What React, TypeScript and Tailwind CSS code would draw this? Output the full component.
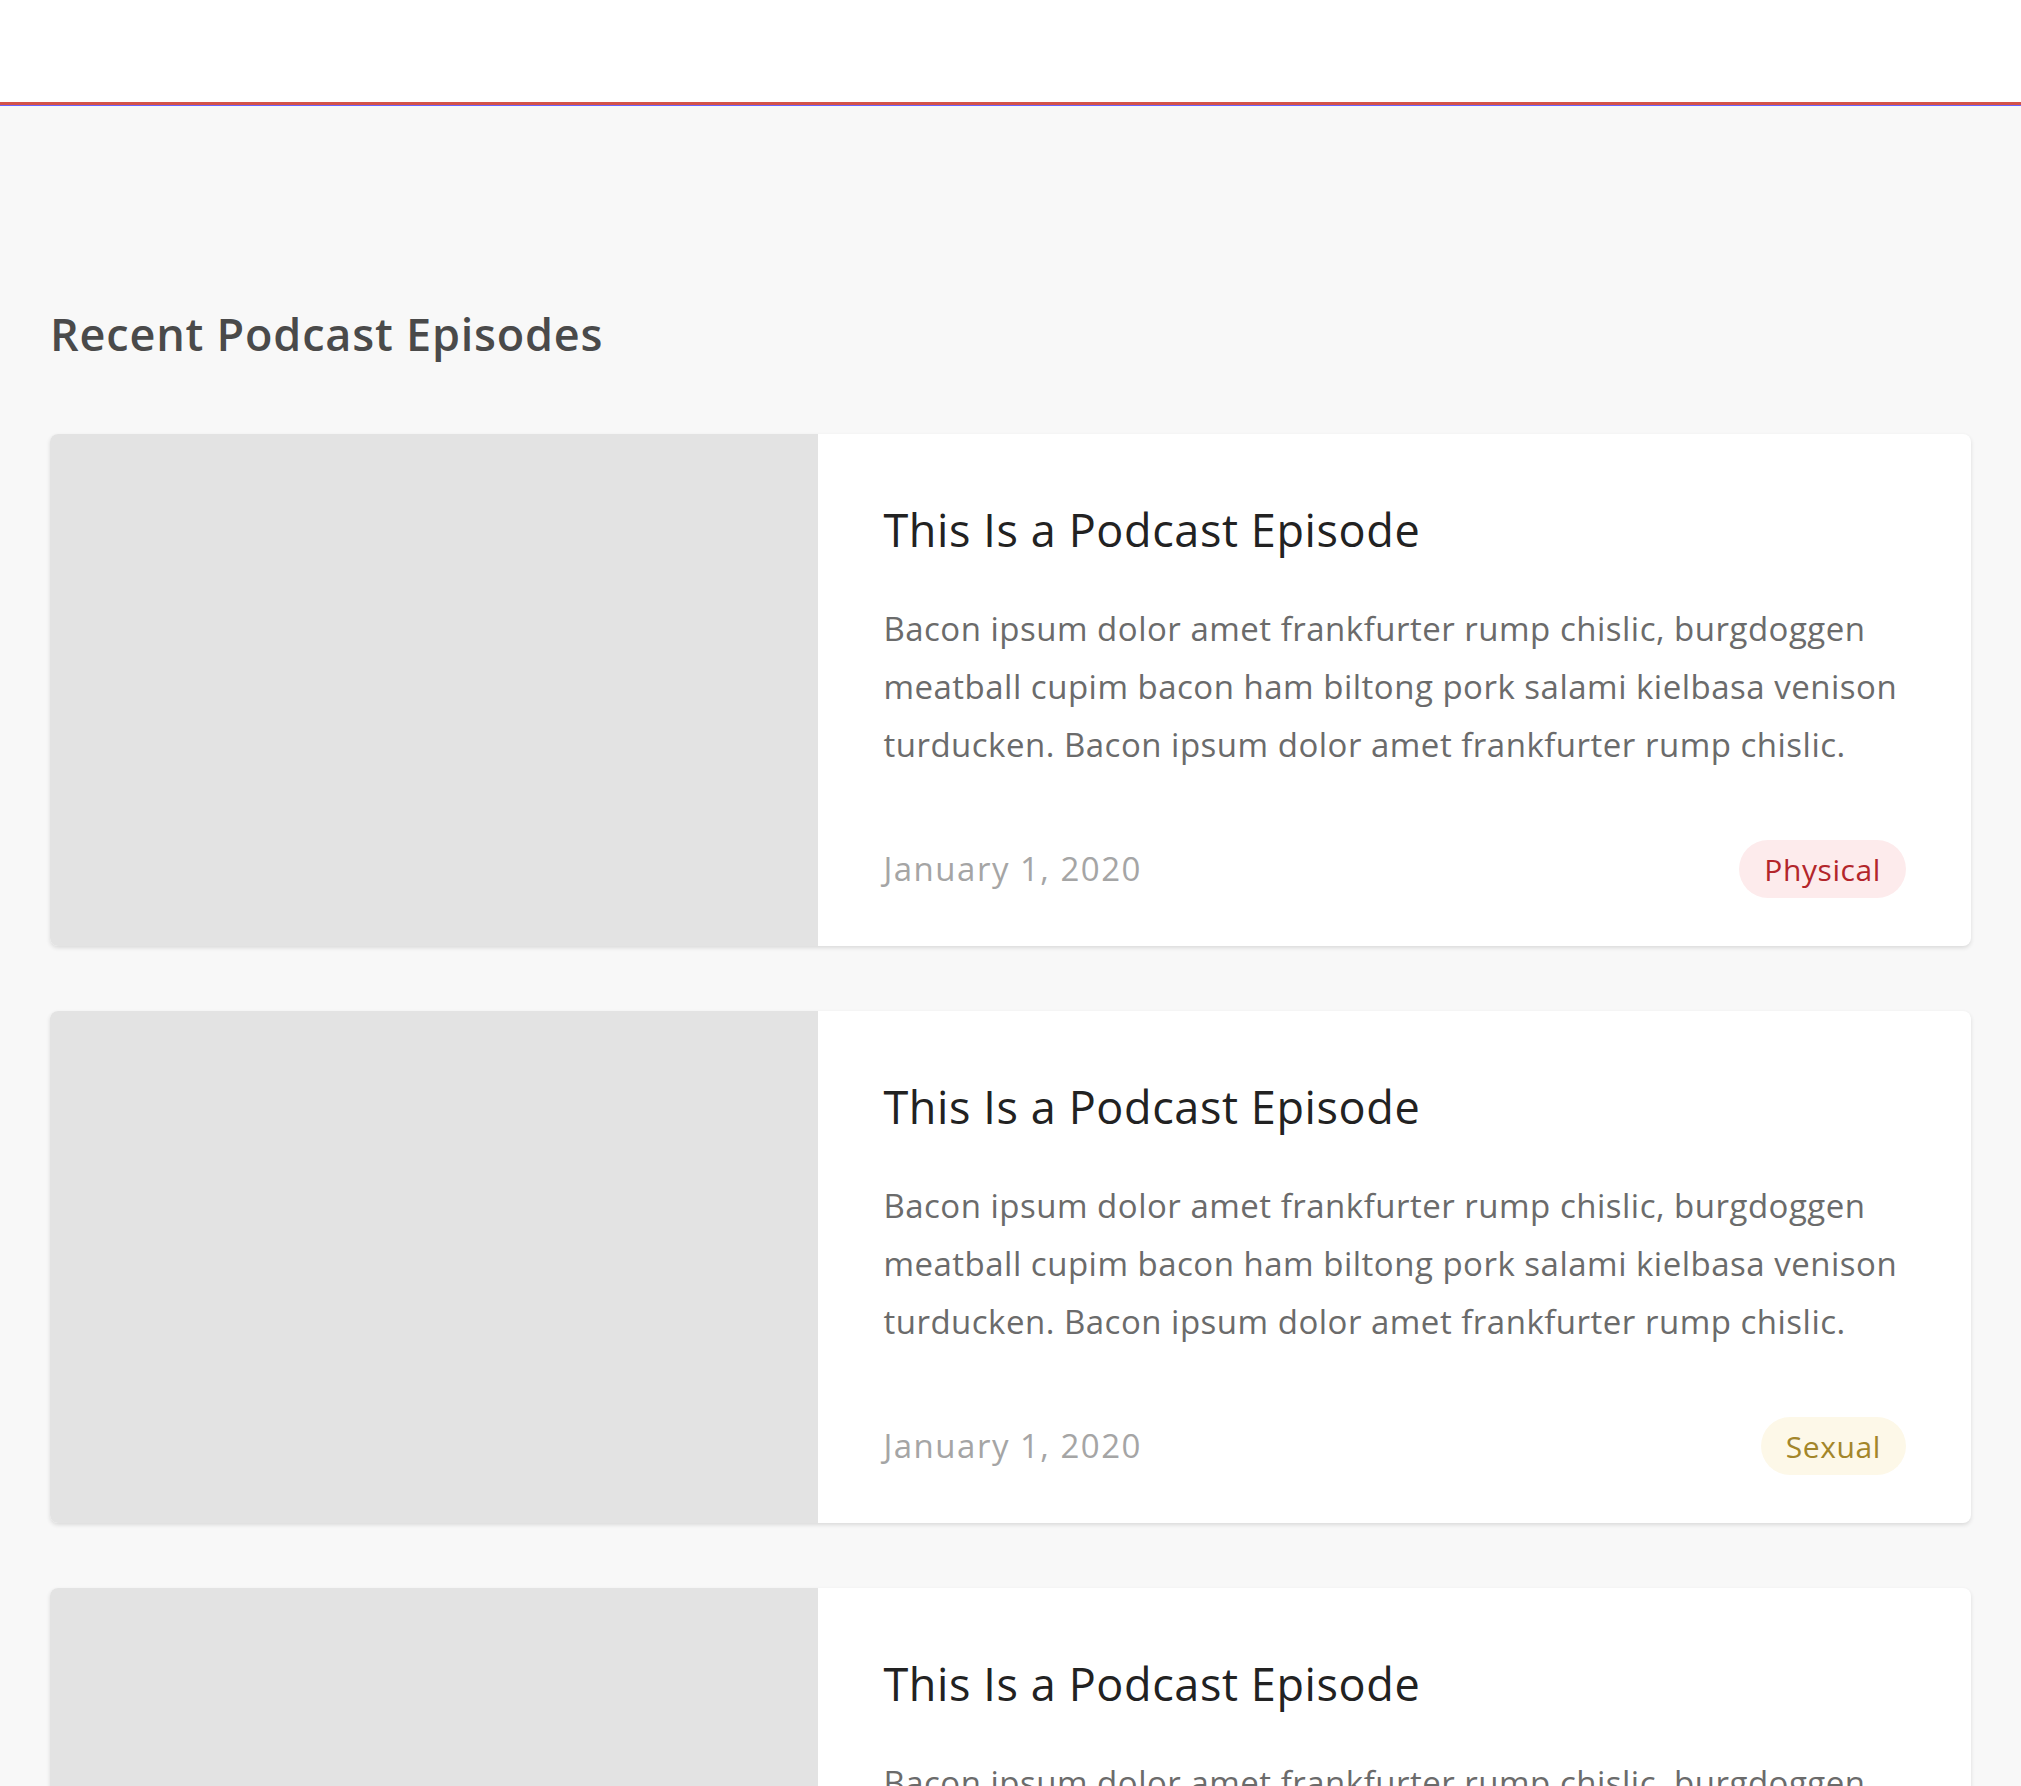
import React from 'react';

type Episode = {
  title: string;
  excerpt: string;
  date: string;
  tag: string;
  tagClass: string;
};

const excerpt =
  'Bacon ipsum dolor amet frankfurter rump chislic, burgdoggen meatball cupim bacon ham biltong pork salami kielbasa venison turducken. Bacon ipsum dolor amet frankfurter rump chislic.';

const episodes: Episode[] = [
  {
    title: 'This Is a Podcast Episode',
    excerpt,
    date: 'January 1, 2020',
    tag: 'Physical',
    tagClass: 'bg-[#fdebec] text-[#b3262b]',
  },
  {
    title: 'This Is a Podcast Episode',
    excerpt,
    date: 'January 1, 2020',
    tag: 'Sexual',
    tagClass: 'bg-[#fdf8e8] text-[#a3862a]',
  },
  {
    title: 'This Is a Podcast Episode',
    excerpt,
    date: 'January 1, 2020',
    tag: 'Mental',
    tagClass: 'bg-[#e9f3fd] text-[#2a6aa3]',
  },
];

const EpisodeCard = ({ episode }: { episode: Episode }) => {
  return (
    <article className="flex h-[512px] rounded-lg bg-white shadow-[0_2px_4px_rgba(0,0,0,0.12)] overflow-hidden">
      {/* Thumbnail placeholder */}
      <div className="w-[40%] shrink-0 bg-[#e3e3e3]" />

      {/* Body */}
      <div className="flex flex-1 flex-col px-[65px] pt-[68px] pb-[48px]">
        <h3 className="text-[45px] leading-[56px] tracking-[0.6px] text-[#222222]">{episode.title}</h3>
        <p className="mt-[42px] -mr-[30px] text-[33px] leading-[58px] tracking-[0.5px] text-[#6b6b6b]">
          {episode.excerpt}
        </p>
        <div className="mt-auto flex items-center justify-between">
          <span className="text-[33px] tracking-[1.5px] text-[#a5a5a5]">{episode.date}</span>
          <span
            className={`flex h-[58px] items-center rounded-full px-[25px] text-[30px] tracking-[0.6px] ${episode.tagClass}`}
          >
            {episode.tag}
          </span>
        </div>
      </div>
    </article>
  );
};

export default function App() {
  return (
    <div className="min-h-screen bg-[#f8f8f8] font-['Open_Sans',sans-serif]">
      {/* Top bar */}
      <header className="h-[102px] bg-white" />
      <div className="h-[3px] bg-[#d4534a]" />
      <div className="h-px bg-[#6b63ff]" />

      <main className="px-[50px] pt-[200px]">
        <h2 className="text-[45px] leading-[56px] font-semibold tracking-[0.8px] text-[#4a4a4a]">
          Recent Podcast Episodes
        </h2>

        <div className="mt-[72px] flex flex-col gap-[65px]">
          {episodes.map((ep, i) => (
            <EpisodeCard key={i} episode={ep} />
          ))}
        </div>
      </main>
    </div>
  );
}
